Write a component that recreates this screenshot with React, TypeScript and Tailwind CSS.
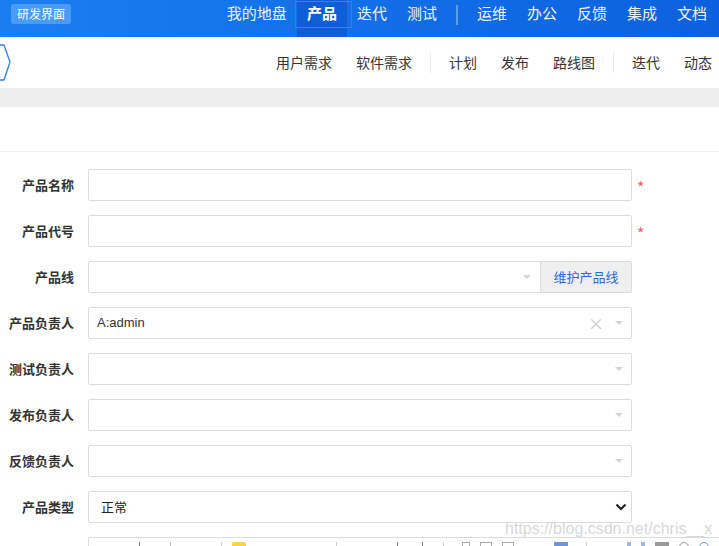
import React from 'react'

const font = { fontFamily: '"Microsoft YaHei", "Noto Sans CJK SC", "Liberation Sans", sans-serif' }

const mainNav = ['我的地盘', '产品', '迭代', '测试', '|', '运维', '办公', '反馈', '集成', '文档']
const subNav = ['用户需求', '软件需求', '|', '计划', '发布', '路线图', '|', '迭代', '动态']

function Caret() {
  return (
    <svg width="10" height="6" viewBox="0 0 10 6" className="shrink-0">
      <path d="M1 1 L9 1 L5 5 Z" fill="#d4d4d4" />
    </svg>
  )
}

function Row({ label, children, required }: { label: string; children: React.ReactNode; required?: boolean }) {
  return (
    <div className="flex items-center h-[32px]">
      <div className="w-[74px] text-right text-[13px] font-bold text-[#333]">{label}</div>
      <div className="ml-[14px] w-[544px] h-full">{children}</div>
      {required && <span className="ml-[5px] text-[#f06060] text-[16px] mt-[4px]">*</span>}
    </div>
  )
}

function Picker({ value, clear }: { value?: string; clear?: boolean }) {
  return (
    <div className="h-full flex items-center border border-[#dcdcdc] rounded-[2px] bg-white pl-[8px] pr-[7px]">
      <span className="flex-1 text-[13px] text-[#333]" style={{ fontFamily: '"Liberation Sans", "Noto Sans CJK SC", sans-serif' }}>{value}</span>
      {clear && <span className="text-[#c8c8c8] text-[16px] mr-[10px] leading-none">×</span>}
      <Caret />
    </div>
  )
}

export default function App() {
  return (
    <div className="w-[719px] h-[546px] overflow-hidden bg-white relative" style={font}>
      <div className="h-[37px] flex items-center bg-gradient-to-r from-[#1a7ef1] to-[#0c60de]">
        <div className="ml-[11px] px-[6px] h-[20px] mb-[10px] flex items-center rounded-[3px] bg-[#4b9bf3] text-white text-[12px]">研发界面</div>
        <div className="ml-auto flex items-center h-full pr-[2px]">
          {mainNav.map((n, i) =>
            n === '|' ? (
              <div key={i} className="w-[2px] h-[20px] bg-[#5a9df0] mx-[9px] mb-[8px]" />
            ) : (
              <div
                key={i}
                className={`h-full flex items-start pt-[2px] px-[10px] text-[15px] ${
                  n === '产品' ? 'bg-[#0e5fd7] text-white font-bold relative' : 'text-[#eef4ff]'
                }`}
              >
                {n === '产品' && <div className="absolute left-[-2px] top-[1px] w-[57px] h-[27px] border border-[#e04848]" />}
                {n}
              </div>
            )
          )}
        </div>
      </div>

      <div className="h-[51px] flex items-center bg-white">
        <svg width="12" height="40" viewBox="0 0 12 40" className="mt-[1px]">
          <polyline points="0,2 4,2 10,19 4,37 0,37" fill="none" stroke="#2f7ef0" strokeWidth="1.3" />
        </svg>
        <div className="ml-auto flex items-center mr-[-5px]">
          {subNav.map((n, i) =>
            n === '|' ? (
              <div key={i} className="w-[1px] h-[20px] bg-[#e6e6e6] mx-[6px]" />
            ) : (
              <div key={i} className="px-[12px] text-[14px] text-[#333]">{n}</div>
            )
          )}
        </div>
      </div>

      <div className="h-[19px] bg-[#eeeeee]" />
      <div className="h-[45px] border-b border-[#efefef]" />

      <div className="pt-[17px] flex flex-col gap-[14px]">
        <Row label="产品名称" required>
          <div className="h-full border border-[#dcdcdc] rounded-[2px]" />
        </Row>
        <Row label="产品代号" required>
          <div className="h-full border border-[#dcdcdc] rounded-[2px]" />
        </Row>
        <Row label="产品线">
          <div className="h-full flex">
            <div className="flex-1 flex items-center justify-end border border-[#dcdcdc] rounded-l-[2px] pr-[8px]">
              <Caret />
            </div>
            <div className="w-[91px] flex items-center justify-center bg-[#efefef] border border-l-0 border-[#dcdcdc] rounded-r-[2px] text-[13px] text-[#2a6ae0]">
              维护产品线
            </div>
          </div>
        </Row>
        <Row label="产品负责人">
          <Picker value="A:admin" clear />
        </Row>
        <Row label="测试负责人">
          <Picker />
        </Row>
        <Row label="发布负责人">
          <Picker />
        </Row>
        <Row label="反馈负责人">
          <Picker />
        </Row>
        <Row label="产品类型">
          <div className="h-full flex items-center border border-[#dcdcdc] rounded-[2px] pl-[12px] pr-[4px]">
            <span className="flex-1 text-[13px] text-[#222]">正常</span>
            <svg width="12" height="8" viewBox="0 0 12 8">
              <path d="M1.5 1.5 L6 6 L10.5 1.5" fill="none" stroke="#222" strokeWidth="2.2" />
            </svg>
          </div>
        </Row>
        <div className="flex">
          <div className="ml-[88px] flex-1 h-[20px] border border-r-0 border-[#dcdcdc] rounded-tl-[2px] flex items-start pt-[4px] gap-[10px] pl-[50px]">
            <div className="w-[1px] h-[6px] bg-[#777]" />
            <div className="w-[1px] h-[6px] bg-[#bbb] ml-[20px]" />
            <div className="w-[1px] h-[6px] bg-[#ccc] ml-[40px]" />
            <div className="w-[14px] h-[4px] bg-[#f5d545] rounded-t-[2px]" />
            <div className="w-[1px] h-[6px] bg-[#ccc] ml-[80px]" />
            <div className="w-[1px] h-[6px] bg-[#777] ml-[50px]" />
            <div className="w-[1px] h-[6px] bg-[#777] ml-[14px]" />
            <div className="w-[1px] h-[6px] bg-[#ccc] ml-[10px]" />
            <div className="w-[8px] h-[6px] border border-[#aaa] ml-[8px]" />
            <div className="w-[12px] h-[6px] border border-[#aaa]" />
            <div className="w-[12px] h-[6px] border border-[#aaa]" />
            <div className="w-[14px] h-[4px] bg-[#6d93d8] ml-[30px]" />
            <div className="w-[1px] h-[6px] bg-[#ccc] ml-[8px]" />
            <div className="w-[4px] h-[4px] bg-[#9fb6e6] ml-[30px]" />
            <div className="w-[4px] h-[4px] bg-[#9fb6e6]" />
            <div className="w-[14px] h-[4px] bg-[#999]" />
            <div className="w-[10px] h-[6px] border border-[#999] rounded-t-full" />
            <div className="w-[10px] h-[6px] border border-[#6d93d8] rounded-t-full" />
          </div>
        </div>
      </div>

      <div className="absolute left-[505px] top-[517px] text-[16px] text-[#d8d8d8]" style={{ fontFamily: '"Liberation Sans", sans-serif' }}>
        https://blog.csdn.net/chris__x
      </div>
    </div>
  )
}
